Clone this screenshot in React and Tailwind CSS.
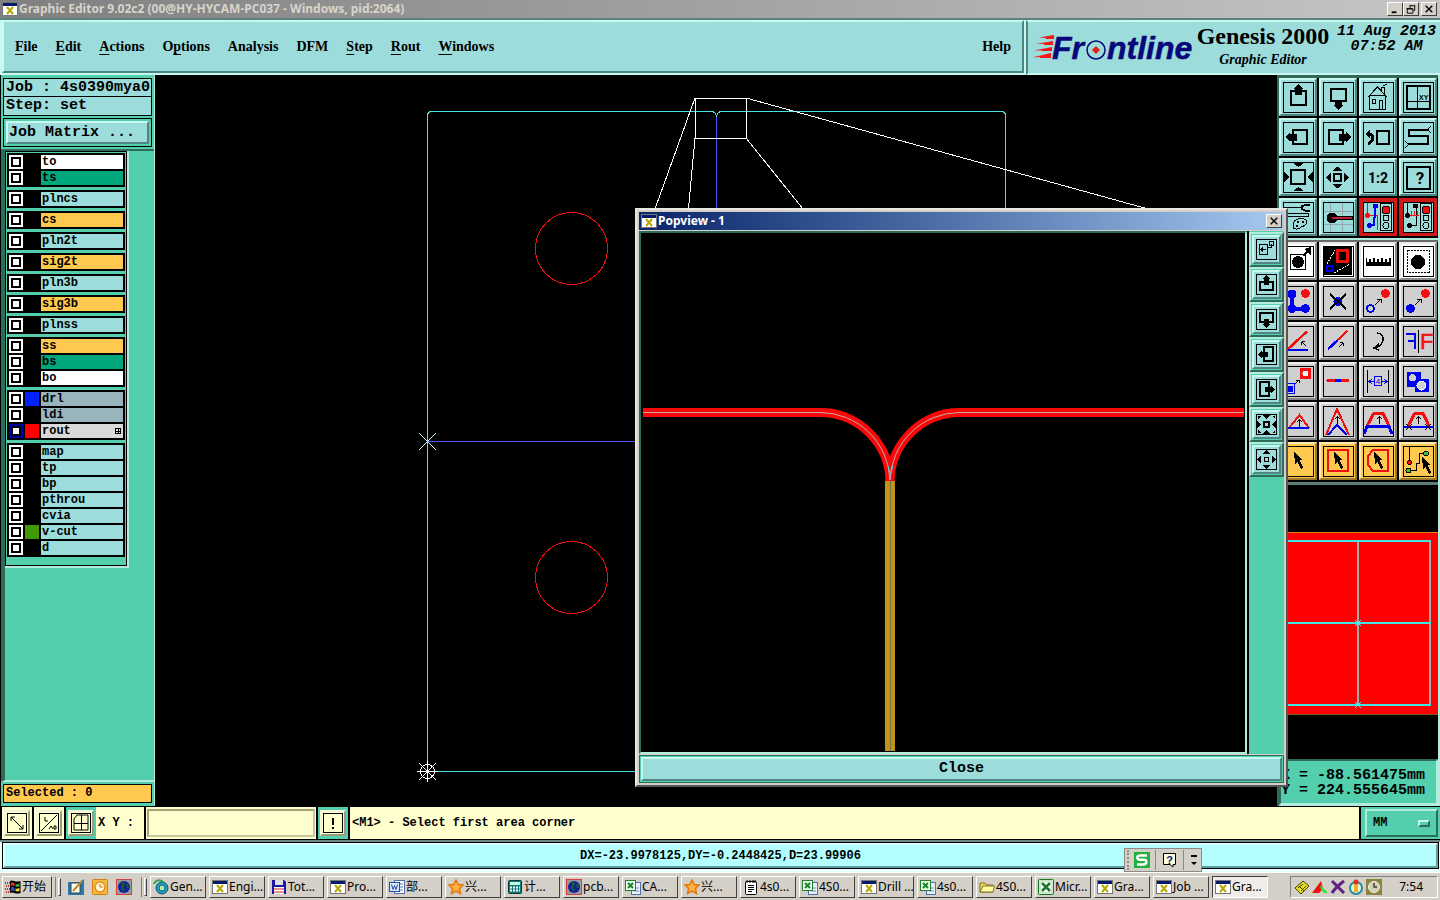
import { useState } from 'react'

const MONO = 'font-["Liberation_Mono",monospace] font-bold'
const SERIF = 'font-["Liberation_Serif",serif] font-bold'
const UI = 'font-["Noto_Sans","Noto_Sans_CJK_SC",sans-serif]'

const RAISED = 'border-2 border-t-[#c9f7f1] border-l-[#c9f7f1] border-b-[#4f8583] border-r-[#4f8583]'
const SUNKEN = 'border-2 border-t-[#2f6b5b] border-l-[#2f6b5b] border-b-[#b3ecdc] border-r-[#b3ecdc]'
const WIN_RAISED = 'border border-t-white border-l-white border-b-[#404040] border-r-[#404040]'

const MENUS = [
  ['', 'F', 'ile'], ['', 'E', 'dit'], ['', 'A', 'ctions'], ['O', 'p', 'tions'], ['Analysis', '', ''],
  ['DFM', '', ''], ['', 'S', 'tep'], ['', 'R', 'out'], ['', 'W', 'indows'],
]

const TEAL = 'bg-[#9cdcdb]'
const GOLD = 'bg-[#ffc84f]'
const GREEN = 'bg-[#00a67c]'
const SLATE = 'bg-[#9ab4be]'

const LAYER_GROUPS = [
  [{ name: 'to', bg: 'bg-white' }, { name: 'ts', bg: GREEN }],
  [{ name: 'plncs', bg: TEAL }],
  [{ name: 'cs', bg: GOLD }],
  [{ name: 'pln2t', bg: TEAL }],
  [{ name: 'sig2t', bg: GOLD }],
  [{ name: 'pln3b', bg: TEAL }],
  [{ name: 'sig3b', bg: GOLD }],
  [{ name: 'plnss', bg: TEAL }],
  [{ name: 'ss', bg: GOLD }, { name: 'bs', bg: GREEN }, { name: 'bo', bg: 'bg-white' }],
  [
    { name: 'drl', bg: SLATE, swatch: 'bg-[#0020ff]' },
    { name: 'ldi', bg: SLATE },
    { name: 'rout', bg: 'bg-[#d9d9d9]', swatch: 'bg-[#ff0000]', active: true },
  ],
  [
    { name: 'map', bg: TEAL }, { name: 'tp', bg: TEAL }, { name: 'bp', bg: TEAL }, { name: 'pthrou', bg: TEAL },
    { name: 'cvia', bg: TEAL }, { name: 'v-cut', bg: TEAL, swatch: 'bg-[#3f9900]' }, { name: 'd', bg: TEAL },
  ],
]

const R = '#f01010'
const B = '#0000f0'

function Cursor({ x, y }) {
  return <path transform={`translate(${x} ${y})`} d="M0 0L9 8H5.5L9.5 15.5L7 17L3.5 9.5L1 12Z" fill="#000" />
}

function SmallArrow({ x, y, r = 0 }) {
  return <path transform={`translate(${x} ${y}) rotate(${r})`} d="M0 3.5V-3.5M-2.5 -1L0 -3.5L2.5 -1" fill="none" stroke="#000" />
}

function Light({ dark }) {
  return (
    <g stroke="#000">
      <rect x="21.5" y="5.5" width="11" height="27" fill="#9cdcdb" />
      <circle cx="27" cy="12" r="4" fill={R} />
      <circle cx="27" cy="20" r="3" fill="#9cdcdb" />
      <circle cx="27" cy="27.5" r="3" fill="#9cdcdb" />
      {dark
        ? <path d="M8.500 5V17M17 9V27H11" fill="none" />
        : <path d="M8.500 5V17H18.500V32" fill="none" stroke={R} />}
      {!dark && <path d="M16 9V19L15 20V27H11" fill="none" stroke={B} strokeWidth="2" />}
      {dark && <path d="M12.500 13V18M15.500 13V18M18.500 13V18M11 17.500H20" stroke={R} />}
      <g stroke="none">
        <circle cx="16.500" cy="8" r="2.500" fill={dark ? '#000' : B} />
        <circle cx="8.500" cy="17.500" r="2.500" fill={dark ? '#000' : R} />
        <circle cx="10.500" cy="27.500" r="2.500" fill={dark ? '#000' : B} />
      </g>
    </g>
  )
}

// Drawn on a 38px button face, 4px in from the edge
const ICONS = {
  panUp: <><rect x="12" y="13" width="15" height="14" fill="none" stroke="#000" strokeWidth="2" /><path d="M19.500 6L25 11H23V17H16V11H14Z" /></>,
  panDown: <><rect x="12" y="11" width="15" height="12" fill="none" stroke="#000" strokeWidth="2" /><path d="M19.500 32L14 27H16V22H23V27H25Z" /></>,
  home: <path d="M9 19L18.500 9L28 19M10.500 17.500V31.500H26.500V17.500M10.500 17.500H26.500M20.500 31V22.500H23.500V31M13.500 21.500H16.500V25.500H13.500ZM22.500 13V9.500H25.500V16M24 8L28 6" fill="none" stroke="#000" />,
  frameXY: <><rect x="8" y="8" width="23" height="23" fill="none" stroke="#000" strokeWidth="2" /><path d="M18.500 9V23M8 23.500H31M18.500 23V31" stroke="#000" fill="none" /><text x="20" y="22" fontSize="7" fontWeight="bold" fontFamily="Liberation Sans">XY</text></>,
  panLeft: <><rect x="14" y="12" width="14" height="14" fill="none" stroke="#000" strokeWidth="2" /><path d="M6 19L11 14V15.500H18V22.500H11V24Z" /></>,
  panRight: <><rect x="10" y="12" width="14" height="14" fill="none" stroke="#000" strokeWidth="2" /><path d="M32 19L27 14V15.500H20V22.500H27V24Z" /></>,
  prevView: <><rect x="18" y="13" width="12" height="13" fill="none" stroke="#000" strokeWidth="2" /><path d="M6 16L11 12V20Z" /><path d="M10 16C15 16 15.500 23 9 26" fill="none" stroke="#000" strokeWidth="3" /></>,
  serpentine: <><path d="M30 12H10V18H29V26H9" fill="none" stroke="#000" strokeWidth="2" /><path d="M29 11L32 8M29 12L32 15M9 26L6 23M9 27L6 30" stroke="#000" /></>,
  zoomIn: <><rect x="12" y="12" width="14" height="14" fill="none" stroke="#000" strokeWidth="2" /><path d="M14 5H25L19.500 9ZM14 33H25L19.500 29ZM5 13V25L10 19ZM34 13V25L29 19Z" /></>,
  zoomOut: <><rect x="15" y="16" width="7" height="7" fill="none" stroke="#000" strokeWidth="2" /><path d="M13 13H24L18.500 8.500ZM13 26H24L18.500 30.500ZM12 14V25L7.500 19.500ZM25 14V25L30 19.500Z" /></>,
  oneToTwo: <text x="19" y="25" textAnchor="middle" fontSize="14" fontWeight="bold" fontFamily="Roboto">1:2</text>,
  help: <><rect x="8" y="9" width="23" height="22" fill="none" stroke="#000" strokeWidth="2" /><text x="21" y="26" textAnchor="middle" fontSize="17" fontWeight="bold" fontFamily="Roboto">?</text></>,
  tools: <><path d="M5 9.500H23M5 15.500H29V18.500H5" fill="none" stroke="#000" strokeWidth="1" /><path d="M31 7H27L23 8V11L27 13H31" fill="none" stroke="#000" strokeWidth="2" /><path d="M15 24C17 20 24 20 27 22C29 25 26 28 22 29C20 32 14 32 14 28Z" fill="none" stroke="#000" /><path d="M18 24H20M23 24H25M17 28H19" stroke="#000" strokeWidth="2" /></>,
  probe: <><path d="M11.500 5V34M23.500 5V34M5 13.500H34M5 26.500H34" stroke="#94aaa9" /><circle cx="13" cy="20" r="5.500" /><rect x="12" y="18.500" width="21" height="3" fill="#c02030" stroke="#000" strokeWidth="1" /></>,
  lightOn: <Light />,
  lightOff: <Light dark />,
  padMove: <><rect x="11.500" y="12.500" width="15" height="15" fill="none" stroke="#000" /><circle cx="19" cy="20" r="6" /><path d="M24 14L29 9" stroke="#000" strokeWidth="2" /><path d="M32 5V13L25 7Z" /></>,
  popview: <><rect x="5" y="5" width="28" height="28" /><rect x="18.500" y="8.500" width="10" height="11" fill="none" stroke={R} strokeWidth="3" /><rect x="8" y="24" width="5" height="5" fill="none" stroke={B} strokeWidth="2" /><path d="M8 22L16 8M15 31L31 22" stroke="#fff" strokeDasharray="2 1" /></>,
  ruler: <path d="M7 16V24H32V16H30V20H28V17H26V20H24V16H22V20H20V17H18V20H16V16H14V20H12V17H10V20H8V16Z" />,
  select: <><rect x="8.500" y="8.500" width="22" height="22" fill="none" stroke="#000" strokeDasharray="2 1" /><circle cx="19" cy="20" r="7" /></>,
  copyPads: <><path d="M13 12V26.500H27" stroke={B} strokeWidth="4" fill="none" /><circle cx="13" cy="12" r="4.500" fill={B} /><circle cx="13" cy="26.500" r="4.500" fill={B} /><circle cx="26.500" cy="26.500" r="4.500" fill={B} /><circle cx="26.500" cy="11.500" r="4.500" fill={R} /></>,
  deletePad: <><circle cx="19" cy="19.500" r="4.500" fill={B} /><path d="M11 12L27 27M27 12L11 27" stroke="#000" strokeWidth="2" /></>,
  moveRing: <><circle cx="11.500" cy="26.500" r="3.500" fill="none" stroke={B} strokeWidth="2" /><circle cx="26.500" cy="11.500" r="4.500" fill={R} /><path d="M16 23L22 17M18 17H22V21" fill="none" stroke="#000" /></>,
  movePad: <><circle cx="11.500" cy="26.500" r="4.500" fill={B} /><circle cx="26.500" cy="11.500" r="4.500" fill={R} /><path d="M16 23L22 17M18 17H22V21" fill="none" stroke="#000" /></>,
  angle: <><path d="M8 28L28 9.500" stroke={R} strokeWidth="2.500" /><path d="M7 28H29" stroke={B} strokeWidth="2" /><SmallArrow x={25} y={22} r={-45} /></>,
  extend: <><path d="M9 27L19 18" stroke={B} strokeWidth="2.500" /><path d="M19 18L28 9" stroke={R} strokeWidth="2.500" /><SmallArrow x={22} y={23} r={45} /></>,
  rotate: <><path d="M18 11C26 12 27 22 16 26" fill="none" stroke="#000" strokeWidth="1.500" /><path d="M20 22L15 26L20 28" fill="none" stroke="#000" strokeWidth="1.500" /></>,
  mirror: <><path d="M19.500 8V31" stroke="#000" /><path d="M7 12H16V27M9 19H16" fill="none" stroke={B} strokeWidth="2" /><text x="21" y="27" fontSize="22" fontFamily="Liberation Sans" fill={R} stroke={R} strokeWidth="0.500">F</text></>,
  resizePad: <><rect x="21" y="6" width="11" height="11" fill={R} /><circle cx="26.500" cy="11.500" r="3" fill="#eee" /><rect x="5.500" y="21.500" width="10" height="10" fill="none" stroke={B} /><rect x="8" y="24" width="6" height="6" fill={B} /><path d="M16 22L20 18M17 18H20V21" fill="none" stroke="#000" /></>,
  segment: <><path d="M9 18.500H29" stroke={R} strokeWidth="3" strokeLinecap="round" /><path d="M16 18.500H22" stroke={B} strokeWidth="3" /></>,
  spacing: <><path d="M8.500 8V31M29.500 8V31" stroke="#000" /><path d="M10 19.500H15M13 17L10 19.500L13 22M28 19.500H23M25 17L28 19.500L25 22M15.500 14.500H22.500V23.500H15.500Z" fill="none" stroke={B} /><text x="19" y="22" textAnchor="middle" fontSize="8" fill={B} fontFamily="Liberation Sans">4</text></>,
  contour: <><path d="M8 10H22V17H30V30H16V25H8Z" fill={B} /><circle cx="13.500" cy="15.500" r="3.500" fill="#d0d0d0" /><circle cx="22.500" cy="23.500" r="4.500" fill="#d0d0d0" stroke="#fff" /></>,
  triLow: <><path d="M10 26L20.500 13L30 26" fill="none" stroke={R} strokeWidth="2" /><path d="M6 26H30" stroke={B} strokeWidth="2" /><SmallArrow x={20.5} y={21} /></>,
  triHigh: <><path d="M7 33L18 7L30 33" fill="none" stroke={R} strokeWidth="2" /><path d="M9 33L18 23L28 33" fill="none" stroke={B} strokeWidth="2" /><SmallArrow x={18.5} y={18} /></>,
  trapLegs: <><path d="M8 24L15 11H24L30 24" fill="none" stroke={R} strokeWidth="3" /><path d="M5 32L8 24.500H30L33 32" fill="none" stroke={B} strokeWidth="3" /><SmallArrow x={20.5} y={18} /></>,
  trapCut: <><path d="M9 24L16 11H24L30 24" fill="none" stroke={R} strokeWidth="3" /><path d="M5 25H34" stroke={B} strokeWidth="2" /><path d="M7 22L13 28M13 22L7 28M26 22L32 28M32 22L26 28" stroke="#000" /><SmallArrow x={19.5} y={18} /></>,
  pick: <Cursor x={15} y={10} />,
  pickRect: <><rect x="9" y="8" width="20" height="21" fill="none" stroke={R} strokeWidth="2" /><Cursor x={15} y={10} /></>,
  pickPoly: <><path d="M14 8H29V29H14L9 23V14Z" fill="none" stroke={R} strokeWidth="2" /><Cursor x={15} y={10} /></>,
  pickNet: <><path d="M10.500 5V19M27 11.500H20.500V21.500H17.500V28.500H10" fill="none" stroke="#000" /><circle cx="10.500" cy="20.500" r="2" fill={R} stroke="#000" /><circle cx="27" cy="11.500" r="2.500" fill="#3fc030" stroke="#000" /><circle cx="9.500" cy="28.500" r="2.500" fill="#3fc030" stroke="#000" /><Cursor x={23} y={15} /></>,
}

const VIEW_TOOLS = [
  ['panUp', 'Pan up'], ['panDown', 'Pan down'], ['home', 'Home'], ['frameXY', 'Zoom to XY'],
  ['panLeft', 'Pan left'], ['panRight', 'Pan right'], ['prevView', 'Previous view'], ['serpentine', 'Serpentine'],
  ['zoomIn', 'Zoom in'], ['zoomOut', 'Zoom out'], ['oneToTwo', 'Scale'], ['help', 'Help'],
  ['tools', 'Tools'], ['probe', 'Probe'], ['lightOn', 'Netlist on'], ['lightOff', 'Netlist off'],
]

const EDIT_TOOLS = [
  ['padMove', 'Move pad'], ['popview', 'Popview'], ['ruler', 'Measure'], ['select', 'Select'],
  ['copyPads', 'Copy pads'], ['deletePad', 'Delete'], ['moveRing', 'Move ring'], ['movePad', 'Move'],
  ['angle', 'Angle'], ['extend', 'Extend'], ['rotate', 'Rotate'], ['mirror', 'Mirror'],
  ['resizePad', 'Resize'], ['segment', 'Segment'], ['spacing', 'Spacing'], ['contour', 'Contour'],
  ['triLow', 'Slide'], ['triHigh', 'Stretch'], ['trapLegs', 'Stretch legs'], ['trapCut', 'Cut legs'],
  ['pick', 'Pick'], ['pickRect', 'Pick in rectangle'], ['pickPoly', 'Pick in polygon'], ['pickNet', 'Pick net'],
]

// Same ideas as above on a 25px face for the popview side bar
const MINI = [
  ['Copy view', <><path d="M5.500 7.500H13.500V17.500H5.500ZM7 12.500H12M9 10.500L7 12.500L9 14.500M15.500 4.500H19.500V8.500H15.500ZM13.500 10.500H17.500V6.500" fill="none" stroke="#000" /></>],
  ['Pan up', <><rect x="6" y="10" width="13" height="8" fill="none" stroke="#000" strokeWidth="2" /><path d="M12.500 3L17 7H15V13H10V7H8Z" /></>],
  ['Pan down', <><rect x="6" y="6" width="13" height="9" fill="none" stroke="#000" strokeWidth="2" /><path d="M12.500 21L8 17H10V12H15V17H17Z" /></>],
  ['Pan left', <><rect x="10" y="5" width="9" height="14" fill="none" stroke="#000" strokeWidth="2" /><path d="M4 12.500L8 8V10H14V15H8V17Z" /></>],
  ['Pan right', <><rect x="6" y="5" width="9" height="14" fill="none" stroke="#000" strokeWidth="2" /><path d="M21 12.500L17 8V10H11V15H17V17Z" /></>],
  ['Zoom in', <><rect x="10" y="10" width="5" height="5" fill="none" stroke="#000" strokeWidth="2" /><path d="M8 3H17L12.500 7ZM8 22H17L12.500 18ZM3 8V17L7 12.500ZM22 8V17L18 12.500ZM4 4H7L4 7ZM21 4H18L21 7ZM4 21H7L4 18ZM21 21H18L21 18Z" /></>],
  ['Zoom out', <><rect x="10.500" y="10.500" width="4" height="4" fill="none" stroke="#000" /><path d="M9 7H16L12.500 3ZM9 18H16L12.500 22ZM7 9V16L3 12.500ZM18 9V16L22 12.500Z" /></>],
]

function ToolButton({ id, label, tone }) {
  const face = {
    teal: 'bg-[#9cdcdb] border-t-[#c9f7f1] border-l-[#c9f7f1] border-b-[#4f8583] border-r-[#4f8583]',
    red: 'bg-[#d01818] border-[#d01818]',
    white: 'bg-white border-t-[#e8e8e8] border-l-[#e8e8e8] border-b-[#8a8a8a] border-r-[#8a8a8a]',
    grey: 'bg-[#cfcfcf] border-t-[#eeeeee] border-l-[#eeeeee] border-b-[#858585] border-r-[#858585]',
    gold: 'bg-[#ffc84f] border-t-[#ffe9b0] border-l-[#ffe9b0] border-b-[#a07a2c] border-r-[#a07a2c]',
  }[tone]
  return (
    <button type="button" aria-label={label} className={`size-[38px] border-2 ${face}`}>
      <svg viewBox="2 2 34 34" className="block size-[34px]" shapeRendering="crispEdges">
        <rect x="4.500" y="4.500" width="30" height="30" fill={tone === 'red' ? '#9cdcdb' : 'none'} stroke="#000" />
        {ICONS[id]}
      </svg>
    </button>
  )
}

function WindowIcon() {
  return (
    <svg viewBox="0 0 16 16" className="block size-4 shrink-0">
      <rect x="0.500" y="1.500" width="15" height="13" fill="#fff" stroke="#777" />
      <rect x="1" y="2" width="14" height="3" fill="#0a1a6a" />
      <path d="M5 6L11 13M11 6L5 13" stroke="#b8a800" strokeWidth="2" />
    </svg>
  )
}

function TitleBar() {
  return (
    <div className="flex h-[18px] shrink-0 items-center bg-linear-to-r from-[#808080] to-[#c6c6c6] pl-[2px] pr-[3px]">
      <WindowIcon />
      <h1 className={`${UI} ml-px flex-1 text-[12px] leading-4 font-bold text-[#d8d4cc]`}>
        Graphic Editor 9.02c2 (00@HY-HYCAM-PC037 - Windows, pid:2064)
      </h1>
      <div className="flex">
        <CaptionButton label="Minimize"><path d="M4 9.500H9" strokeWidth="2" /></CaptionButton>
        <CaptionButton label="Restore"><path d="M6 2.500H12M6.500 2V5M11.500 2V7.500H10M3 5.500H9.500V10.500H3.500V5M3 6H9" /></CaptionButton>
        <div className="w-[2px]" />
        <CaptionButton label="Close"><path d="M4 2.500L11 9.500M11 2.500L4 9.500" strokeWidth="1.500" /></CaptionButton>
      </div>
    </div>
  )
}

function CaptionButton({ label, onClick, children }) {
  return (
    <button type="button" aria-label={label} onClick={onClick} className={`h-[14px] w-4 bg-[#d4d0c8] ${WIN_RAISED}`}>
      <svg viewBox="0 0 15 12" className="block h-3 w-[14px]" fill="none" stroke="#000">{children}</svg>
    </button>
  )
}

function Logo() {
  return (
    <svg viewBox="0 0 164 40" className="block h-10 w-[164px] shrink-0" role="img" aria-label="Frontline">
      <path d="M7 7.500L22 5V9H14V8ZM4 14L21 11V15H12V14ZM2 20.500L20 17V21H10V20.500ZM0 27.500L19 23V28H8V27Z" fill="#f01818" />
      <g fontFamily="Liberation Sans" fontSize="32" fontWeight="bold" fontStyle="italic" fill="#08087a" stroke="#08087a" strokeWidth="0.500">
        <text x="20" y="29">Fr</text>
        <text x="75" y="29">ntline</text>
      </g>
      <circle cx="64" cy="20" r="9" fill="none" stroke="#08087a" strokeWidth="1.500" />
      <path d="M64 16L68 20L64 24L60 20Z" fill="#f01818" />
    </svg>
  )
}

function Header() {
  return (
    <header className="flex h-[57px] shrink-0 border-t-2 border-t-[#5a8280] bg-[#c9f7f1] pl-[2px]">
      <nav className={`${SERIF} mb-[2px] flex flex-1 items-center gap-[18px] bg-[#9cdcdb] px-[11px] text-[14px] leading-5 ${RAISED}`}>
        {MENUS.map(([pre, key, post]) => (
          <button type="button" key={pre + key + post}>
            {pre}<span className="underline underline-offset-[3px]">{key}</span>{post}
          </button>
        ))}
        <button type="button" className="ml-auto">Help</button>
      </nav>
      <div className="ml-[2px] flex w-[414px] shrink-0 border-y-2 border-l-2 border-t-[#c9f7f1] border-l-[#4f8583] border-b-[#c9f7f1] bg-[#9cdcdb]">
        <div className="pt-2 pl-1"><Logo /></div>
        <div className={`${SERIF} flex w-[134px] flex-col items-center`}>
          <div className="text-2xl leading-7 whitespace-nowrap">Genesis 2000</div>
          <div className="text-[14px] leading-5 italic">Graphic Editor</div>
        </div>
        <div className={`${MONO} ml-auto pt-[2px] pr-1 text-center text-[15px] leading-[15px] italic`}>
          <div>11 Aug 2013</div>
          <div>07:52 AM</div>
        </div>
      </div>
    </header>
  )
}

function LayerRow({ layer }) {
  return (
    <label className="flex h-[14px] gap-[2px]">
      <input
        type="checkbox"
        defaultChecked={layer.active}
        className="m-0 size-[14px] appearance-none border-2 border-white bg-white bg-clip-content p-[2px] outline-2 -outline-offset-4 outline-black checked:border-[#0000a8] checked:bg-white"
      />
      <span className={`w-[14px] ${layer.swatch || 'bg-black'}`} />
      <span className={`${MONO} ${layer.bg} flex flex-1 items-center justify-between pl-px text-[12px] leading-[14px]`}>
        {layer.name}
        {layer.active && (
          <svg viewBox="0 0 7 7" className="mr-px size-[7px]" shapeRendering="crispEdges">
            <path d="M0.500 0.500H5.500V5.500H0.500ZM3 0V6M0 3H6" fill="none" stroke="#000" />
          </svg>
        )}
      </span>
    </label>
  )
}

function LeftPanel() {
  return (
    <aside className="flex w-[155px] shrink-0 flex-col border-x border-l-black border-r-[#b3ecdc] bg-[#53cfae]">
      <div className={`${MONO} px-[2px] pt-[3px] text-[15px]`}>
        <div className="border border-black bg-[#9cdcdb] pl-[2px] leading-[17px] whitespace-nowrap">Job : 4s0390mya0</div>
        <div className="border border-t-0 border-black bg-[#9cdcdb] pl-[2px] leading-[18px]">Step: set</div>
        <div className="mt-[2px] border border-black p-[2px]">
          <button type="button" className={`block w-full bg-[#9cdcdb] px-px text-left leading-[19px] ${RAISED}`}>Job Matrix ...</button>
        </div>
      </div>
      <div className="mt-[2px] flex-1 border-t-2 border-b-2 border-l-4 border-t-[#2f6b5b] border-b-[#b3ecdc] border-l-[#2f6b5b]">
        <div className="w-[124px] border-r-2 border-b-2 border-[#b3ecdc]">
          <div className="border border-black p-px pb-2">
            <div className="flex flex-col gap-[3px]">
              {LAYER_GROUPS.map(group => (
                <div key={group[0].name} className="flex flex-col gap-[2px] bg-black p-[2px]">
                  {group.map(layer => <LayerRow key={layer.name} layer={layer} />)}
                </div>
              ))}
            </div>
          </div>
        </div>
      </div>
      <div className={`${MONO} mx-[2px] mt-[2px] mb-[3px] border border-black bg-[#ffc84f] pl-[2px] text-[12px] leading-[17px]`}>Selected : 0</div>
    </aside>
  )
}

function BoardCanvas() {
  return (
    <svg className="block h-full w-full bg-black" fill="none" shapeRendering="crispEdges">
      <g transform="translate(-155 -75)">
        <path d="M428 441.500H1005M716.500 116V771" stroke="#5050ff" />
        <path d="M427.500 771.500V115.500Q427.500 111.500 431.500 111.500H711.500Q715.500 111.500 716.500 116.500Q717.500 111.500 721.500 111.500H1001.500Q1005.500 111.500 1005.500 115.500V771.500H427.500" stroke="#48e4e4" />
        <path d="M695.500 98.500H746.500V138.500H695.500ZM695 98L642 245M695 138L680 300M746 98L1246 236M746 138L860 280" stroke="#fff" />
        <circle cx="571.500" cy="248.500" r="36" stroke="#f01010" />
        <circle cx="571.500" cy="577.500" r="36" stroke="#f01010" />
        <path d="M419 433L436 450M436 433L419 450" stroke="#c8ffff" />
        <path d="M419 763L436 780M436 763L419 780M417 771.500H438M427.500 761V782" stroke="#fff" />
        <circle cx="427.500" cy="771.500" r="7" stroke="#fff" />
      </g>
    </svg>
  )
}

function RightPanel() {
  return (
    <aside className="flex w-[163px] shrink-0 flex-col border-l-2 border-[#2f6b5b] bg-[#b3ecdc] pr-[2px]">
      <div className="grid grid-cols-4 gap-[2px] border-t-[3px] border-[#2f6b5b] bg-black pr-px pb-[2px]">
        {VIEW_TOOLS.map(([id, label]) => (
          <ToolButton key={id} id={id} label={label} tone={id.startsWith('light') ? 'red' : 'teal'} />
        ))}
      </div>
      <div className="mt-[2px] grid grid-cols-4 gap-[2px] border-t-2 border-[#6a6a6a] bg-black pr-px pb-[2px]">
        {EDIT_TOOLS.map(([id, label], i) => (
          <ToolButton key={id} id={id} label={label} tone={i < 4 ? 'white' : i < 20 ? 'grey' : 'gold'} />
        ))}
      </div>
      <div className="min-h-0 flex-1 border-t-[3px] border-[#5f7d78] bg-black">
        <svg className="block h-full w-full" fill="none" shapeRendering="crispEdges">
          <rect x="0" y="47" width="160" height="183" fill="#ff0000" />
          <path d="M0 47.500H160" stroke="#e08010" />
          <path d="M0 229.500H160" stroke="#806010" />
          <path d="M79 56V220M151 56V220M7 56V220" stroke="#a9a9a9" strokeWidth="2" />
          <path d="M7 56H152M7 138H152M7 220H152" stroke="#40e4e4" strokeWidth="2" />
          <path d="M76 135L82 141M82 135L76 141M76 217L82 223M82 217L76 223" stroke="#40ffff" />
        </svg>
      </div>
      <div className={`${MONO} mb-px bg-[#53cfae] pt-[7px] pb-[5px] text-[15px] leading-[15px] whitespace-pre ${SUNKEN}`}>
        <div>X = -88.561475mm</div>
        <div>Y = 224.555645mm</div>
      </div>
    </aside>
  )
}

function Popview({ onClose }) {
  return (
    <section className="absolute top-[133px] left-[635px] flex h-[579px] w-[653px] flex-col border-2 border-t-[#e8e6e0] border-l-[#e8e6e0] border-b-[#555] border-r-[#555] bg-[#d4d0c8] p-[2px]">
      <div className="flex h-[18px] shrink-0 items-center bg-linear-to-r from-[#0a246a] to-[#a6caf0] px-[2px]">
        <WindowIcon />
        <h2 className={`${UI} ml-px flex-1 text-[12px] leading-4 font-bold text-white`}>Popview - 1</h2>
        <CaptionButton label="Close popview" onClick={onClose}><path d="M4 2.500L11 9.500M11 2.500L4 9.500" strokeWidth="1.500" /></CaptionButton>
      </div>
      <div className="mt-px flex min-h-0 flex-1 bg-black">
        <div className={`min-w-0 flex-1 ${SUNKEN}`}>
          <svg className="block h-full w-full bg-black" fill="none">
            <g transform="translate(-641 -233)">
              <path d="M643 412.500H820A70 70 0 0 1 890 482A70 70 0 0 1 960 412.500H1244" stroke="#f80808" strokeWidth="9" strokeLinejoin="bevel" />
              <path d="M643 412.500H820A70 70 0 0 1 890 480A70 70 0 0 1 960 412.500H1244" stroke="#c5aaaa" />
              <path d="M888 466L890.500 474L893 466" stroke="#30e0e0" />
              <path d="M890 481V751" stroke="#bf960e" strokeWidth="10" />
              <path d="M890.500 481V751" stroke="#776f66" />
            </g>
          </svg>
        </div>
        <div className="ml-[2px] flex w-[35px] shrink-0 flex-col bg-[#53cfae] pt-px">
          {MINI.map(([label, art]) => (
            <div key={label} className="border-2 border-t-[#b3ecdc] border-l-[#b3ecdc] border-b-[#2f6b5b] border-r-[#2f6b5b] p-px">
              <button type="button" aria-label={label} className={`block size-[29px] bg-[#9cdcdb] ${RAISED}`}>
                <svg viewBox="0 0 25 25" className="block size-[25px]" shapeRendering="crispEdges">
                  <rect x="2.500" y="2.500" width="20" height="20" fill="none" stroke="#000" />
                  {art}
                </svg>
              </button>
            </div>
          ))}
        </div>
      </div>
      <div className="mt-px border border-[#2f6b5b] bg-[#53cfae] p-px">
        <button type="button" onClick={onClose} className={`${MONO} block w-full bg-[#9cdcdb] text-[15px] leading-5 ${RAISED}`}>Close</button>
      </div>
    </section>
  )
}

function CommandRow() {
  const cream = 'bg-[#ffffce]'
  return (
    <div className={`${MONO} flex h-[34px] shrink-0 gap-[2px] border-y border-black bg-black pl-[2px] text-[12px]`}>
      <SnapButton label="Snap off" className={cream}><path d="M5 5L17 17M5 9V5H9M17 13V17H13" /></SnapButton>
      <SnapButton label="Snap angle" className={cream}><path d="M3 19L19 3M7 5V9H10M11 17L13 14L15 17M16 14H18V17H16Z" /></SnapButton>
      <SnapButton label="Snap grid" className="bg-[#53cfae]"><path d="M4 7L7 3H18V18H4ZM11.500 3V18M4 11.500H18" /></SnapButton>
      <label htmlFor="xy" className={`${cream} -ml-[2px] flex w-12 items-center pl-[2px] whitespace-pre`}>X Y :</label>
      <div className={`${cream} w-[170px] py-[2px] pr-px pl-px`}>
        <input id="xy" className={`${cream} h-full w-full border-2 border-t-[#a5a57c] border-l-[#a5a57c] border-b-[#c8c8a0] border-r-[#c8c8a0] px-1 outline-none`} />
      </div>
      <SnapButton label="Alert" className="bg-[#53cfae]"><path d="M11 6V13M11 15V17" strokeWidth="2" /></SnapButton>
      <p className={`${cream} flex flex-1 items-center pl-[2px] whitespace-pre`}>{'<M1> - Select first area corner'}</p>
      <div className="w-[79px] bg-[#53cfae] py-[2px] pr-[2px] pl-1">
        <div className="relative h-full">
          <select aria-label="Units" className="h-full w-full appearance-none border-2 border-t-[#b3ecdc] border-l-[#b3ecdc] border-b-[#2f6b5b] border-r-[#2f6b5b] bg-[#53cfae] pl-[6px]">
            <option>MM</option>
            <option>INCH</option>
          </select>
          <span className="pointer-events-none absolute top-[11px] right-2 h-[7px] w-3 border-2 border-t-[#c9f7f1] border-l-[#c9f7f1] border-b-[#2f6b5b] border-r-[#2f6b5b] bg-[#53cfae]" />
        </div>
      </div>
    </div>
  )
}

function SnapButton({ label, className, children }) {
  return (
    <button type="button" aria-label={label} className={`flex w-[30px] shrink-0 items-center justify-center ${className}`}>
      <span className="border-2 border-t-[#f4f4d8] border-l-[#f4f4d8] border-b-[#9b9b78] border-r-[#9b9b78] bg-[#ffffce]">
        <svg viewBox="0 0 22 22" className="block size-[22px]" fill="none" stroke="#000">
          <rect x="1.500" y="1.500" width="19" height="19" />
          {children}
        </svg>
      </span>
    </button>
  )
}

function StatusBar() {
  return (
    <div className="relative h-8 shrink-0 border-t-2 border-[#6f8a8a] bg-[#e8ffff] pr-px pb-[3px] pl-[2px]">
      <div className="h-full border border-black">
        <p className={`${MONO} flex h-full items-center justify-center border-2 border-t-[#dcffff] border-l-[#dcffff] border-b-[#5f9e9e] border-r-[#5f9e9e] bg-[#b3ffff] text-[12px]`}>
          DX=-23.9978125,DY=-0.2448425,D=23.99906
        </p>
      </div>
      <div className="absolute top-[6px] right-[238px] flex h-6 w-[78px] items-center justify-between border border-[#8a8a8a] bg-[#d4d0c8] px-[2px]">
        <span className="h-5 border-l-2 border-dotted border-[#8f8b83]" />
        <svg viewBox="0 0 16 16" className="size-4"><rect width="16" height="16" fill="#20b040" /><path d="M13 3.500H5.500C2.500 4 2.500 7.500 6 7.700H10C13.500 8 13 12 10 12.500H3" fill="none" stroke="#fff" strokeWidth="2.500" /></svg>
        <span className="h-5 border-l border-[#8a8a8a]" />
        <svg viewBox="0 0 16 16" className="size-4"><path d="M1.500 1.500H13.500V12.500H11V15L8 12.500H1.500Z" fill="#ffffe0" stroke="#000" /><text x="7.500" y="11.500" textAnchor="middle" fontSize="11" fontWeight="bold" fontFamily="Liberation Sans" fill="#101060">?</text></svg>
        <span className="h-5 border-l border-[#8a8a8a]" />
        <svg viewBox="0 0 10 16" className="h-4 w-[10px]"><path d="M2 3H8V5H2ZM2 10H8L5 13Z" /></svg>
      </div>
    </div>
  )
}

const APP_ICONS = {
  win: <><rect x="0.500" y="1.500" width="15" height="13" fill="#fff" stroke="#777" /><rect x="1" y="2" width="14" height="3" fill="#0a1a6a" /><path d="M5 6L11 13M11 6L5 13" stroke="#b8a800" strokeWidth="2" /></>,
  genesis: <><circle cx="9" cy="9" r="6" fill="#20a0b0" stroke="#105080" /><circle cx="9" cy="9" r="3" fill="#b0f0a0" stroke="#1060a0" /><path d="M1 5C3 0 8 1 10 3" fill="none" stroke="#30a050" strokeWidth="2" /></>,
  disk: <><path d="M1 1H13L15 3V15H1Z" fill="#1818a0" /><rect x="4" y="1" width="8" height="5" fill="#e0e0e0" /><rect x="3" y="8" width="10" height="7" fill="#fff" /><path d="M3 10H13M3 13H13" stroke="#d02020" /></>,
  word: <><rect x="5.500" y="1.500" width="10" height="13" fill="#fff" stroke="#5070b0" /><path d="M11 5H14M11 8H14M11 11H14" stroke="#5070b0" /><rect x="0.500" y="3.500" width="10" height="9" fill="#dce8fc" stroke="#2050a0" /><path d="M2.500 5.500L4 10.500L5.500 6.500L7 10.500L8.500 5.500" fill="none" stroke="#2050a0" /></>,
  star: <path d="M8 1L10.200 5.500L15 6L11.500 9.500L12.500 14.500L8 12L3.500 14.500L4.500 9.500L1 6L5.800 5.500Z" fill="#ffb040" stroke="#e07810" strokeWidth="1.500" />,
  calc: <><rect x="1.500" y="1.500" width="13" height="13" rx="1" fill="#107878" stroke="#053838" /><rect x="3" y="3" width="10" height="3" fill="#c0ffe0" /><path d="M3 8.500H13M3 11.500H13" stroke="#fff" strokeDasharray="2 1" strokeWidth="2" /></>,
  globe: <><rect x="0.500" y="0.500" width="15" height="15" fill="#9b9b9b" stroke="#d04040" /><circle cx="8" cy="8" r="6" fill="#1020a0" /><path d="M5 3L8 5L6 8L8 12M11 5L12 9" stroke="#206020" strokeWidth="2" fill="none" /></>,
  excel: <><rect x="6.500" y="3.500" width="9" height="12" fill="#e8f0ff" stroke="#5070b0" /><path d="M9 9H14M9 12H14" stroke="#7090d0" /><rect x="0.500" y="1.500" width="10" height="10" fill="#e8ffe8" stroke="#208030" /><path d="M3 4L8 9M8 4L3 9" stroke="#208030" strokeWidth="2" /></>,
  excelApp: <><rect x="0.500" y="0.500" width="15" height="15" rx="1" fill="#c8e8c8" stroke="#187828" /><rect x="3" y="3" width="10" height="10" fill="#fff" /><path d="M4 4L12 12M12 4L4 12" stroke="#187828" strokeWidth="2.500" /></>,
  note: <><rect x="2.500" y="2.500" width="11" height="13" rx="1" fill="#fff" stroke="#000" /><path d="M5 6.500H11M5 8.500H11M5 10.500H11M5 12.500H9" stroke="#000" /><path d="M4 1V4M7 1V4M10 1V4M12 1V4" stroke="#000" /></>,
  folder: <><path d="M1 4H6L8 6H14V13H1Z" fill="#f0d860" stroke="#807020" /><path d="M1 13L4 7H15.500L14 13Z" fill="#ffffa0" stroke="#807020" /></>,
  pen: <><path d="M0 3H12L16 0V16H0Z" fill="#2878b0" /><rect x="3" y="4" width="9" height="10" fill="#fffff0" stroke="#404040" /><path d="M5 12L14 2" stroke="#c08820" strokeWidth="2" /></>,
  outlook: <><rect x="0.500" y="0.500" width="15" height="15" rx="1" fill="#f8b840" stroke="#d08010" /><circle cx="8" cy="8" r="5" fill="#fff4d0" stroke="#e09020" strokeWidth="1.500" /><path d="M8 5V8H11" stroke="#c07010" fill="none" /></>,
  flag: <><path d="M5 2C8 0 10 4 15.500 2V14C10 16 8 12 5 14Z" fill="#000" /><path d="M6 4C8 3 8.500 4 9.500 4.500V7.500C8.500 7 7.500 6 6 7Z" fill="#f03020" /><path d="M10.500 5C12 5.500 13 5 14.500 4.500V7.500C13 8 12 8 10.500 7.500Z" fill="#30b030" /><path d="M6 8.500C8 7.500 8.500 8.500 9.500 9V12C8.500 11.500 7.500 11 6 12Z" fill="#3050e0" /><path d="M10.500 9.500C12 10 13 9.500 14.500 9V12C13 12.500 12 12.500 10.500 12Z" fill="#f8e020" /><path d="M0 4H5M1 7H5M0 10H5M1 13H5" stroke="#c03030" strokeDasharray="1 1" strokeWidth="2" /></>,
  tag: <><path d="M1 9L9 2L15 7L7 15Z" fill="#e8e020" stroke="#403c00" /><path d="M4 9L9 5M7 12L12 7M5 7L10 12" stroke="#403c00" /></>,
  tri: <><path d="M0 14L9 2L11 10L7 14Z" fill="#f01010" /><path d="M8 6L16 14H12L9 11Z" fill="#30e030" /></>,
  x: <path d="M2 2L14 14M14 2C10 5 5 9 2 14" stroke="#602080" strokeWidth="3" fill="none" />,
  pot: <><circle cx="8" cy="9" r="6" fill="#f0f0e0" stroke="#20909a" strokeWidth="2" /><path d="M6 5H10V13H6Z" fill="#f0b020" /><circle cx="8" cy="3" r="2.500" fill="#e03020" /></>,
  clock: <><rect width="16" height="16" fill="#8a8440" /><circle cx="8" cy="8" r="5.500" fill="#d0d0b8" stroke="#f0f0e0" /><path d="M8 4V8H11" stroke="#404020" fill="none" strokeWidth="1.500" /></>,
}

function AppIcon({ id }) {
  return <svg viewBox="0 0 16 16" className="block size-4 shrink-0">{APP_ICONS[id]}</svg>
}

const TASKS = [
  ['genesis', 'Gen...'], ['win', 'Engi...'], ['disk', 'Tot...'], ['win', 'Pro...'], ['word', '部...'], ['star', '兴...'],
  ['calc', '计...'], ['globe', 'pcb...'], ['excel', 'CA...'], ['star', '兴...'], ['note', '4s0...'], ['excel', '4S0...'],
  ['win', 'Drill ...'], ['excel', '4s0...'], ['folder', '4S0...'], ['excelApp', 'Micr...'], ['win', 'Gra...'], ['win', 'Job ...'],
  ['win', 'Gra...'],
]

function Taskbar() {
  return (
    <footer className={`${UI} flex h-7 shrink-0 items-center border-t border-white bg-[#d4d0c8] px-[2px] text-[12px] leading-4`}>
      <button type="button" className={`flex h-[22px] w-[50px] items-center gap-px pl-[2px] ${WIN_RAISED}`}>
        <AppIcon id="flag" />开始
      </button>
      <span className="ml-[3px] h-5 border-l border-[#808080]" />
      <span className={`ml-[2px] h-[18px] w-[3px] ${WIN_RAISED}`} />
      <div className="flex gap-2 px-[7px]">
        {['pen', 'outlook', 'globe'].map(id => (
          <button type="button" key={id} aria-label={id}><AppIcon id={id} /></button>
        ))}
      </div>
      <span className="ml-[2px] h-5 border-l border-[#808080]" />
      <span className={`ml-[2px] h-[18px] w-[3px] ${WIN_RAISED}`} />
      <div className="ml-[3px] flex gap-[3px]">
        {TASKS.map(([icon, label], i) => (
          <button
            type="button"
            key={i}
            className={`flex h-[22px] w-14 items-center gap-px overflow-hidden pl-[2px] whitespace-nowrap ${i === 18 ? 'border border-t-[#404040] border-l-[#404040] border-b-white border-r-white bg-[#efedea]' : WIN_RAISED}`}
          >
            <AppIcon id={icon} />{label}
          </button>
        ))}
      </div>
      <div className="ml-auto flex h-[22px] w-[148px] items-center gap-[2px] border border-t-[#808080] border-l-[#808080] border-b-white border-r-white pl-[3px]">
        {['tag', 'tri', 'x', 'pot', 'clock'].map(id => <AppIcon key={id} id={id} />)}
        <time className="mr-[14px] ml-auto text-[12px]">7:54</time>
      </div>
    </footer>
  )
}

export default function App() {
  const [popview, setPopview] = useState(true)
  return (
    <div className="flex h-screen flex-col overflow-hidden bg-black text-black">
      <TitleBar />
      <Header />
      <main className="relative flex min-h-0 flex-1">
        <LeftPanel />
        <div className="min-w-0 flex-1"><BoardCanvas /></div>
        <RightPanel />
        {popview && <Popview onClose={() => setPopview(false)} />}
      </main>
      <CommandRow />
      <StatusBar />
      <Taskbar />
    </div>
  )
}
